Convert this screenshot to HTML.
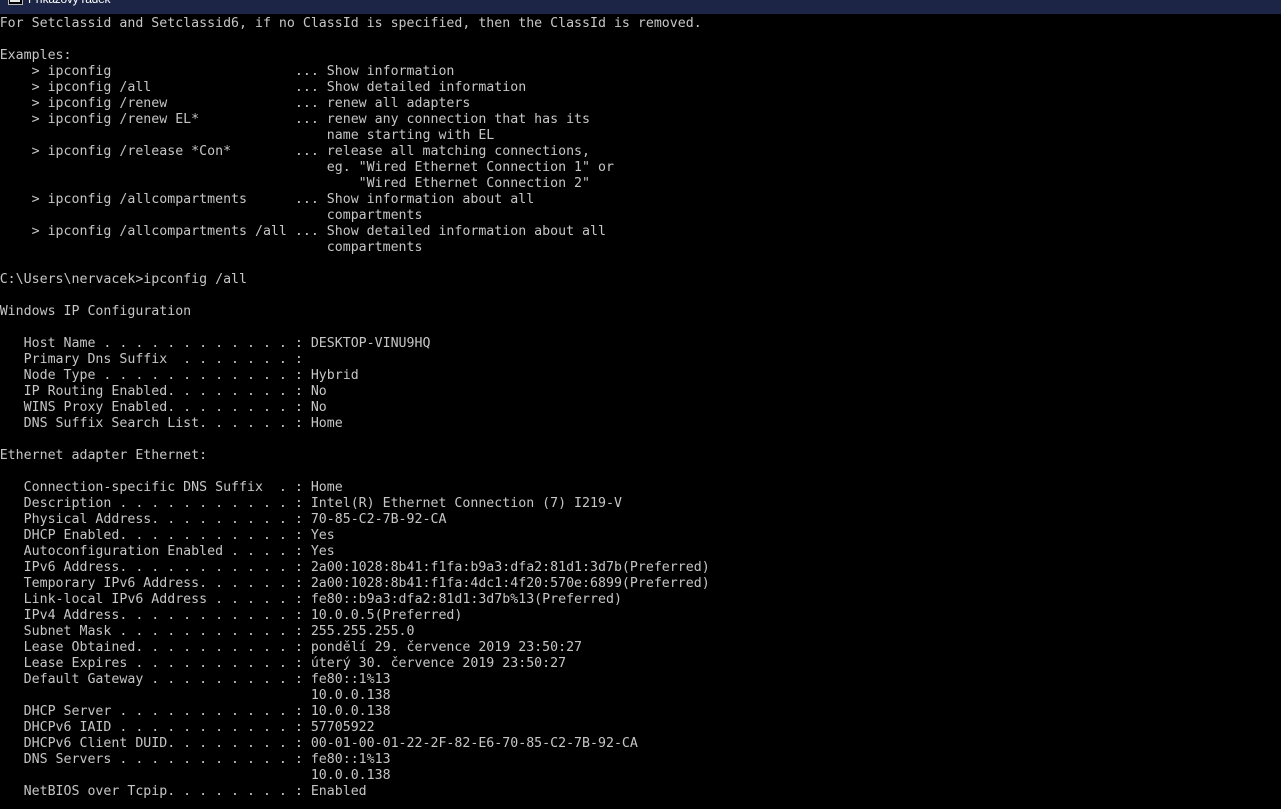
<!DOCTYPE html>
<html><head><meta charset="utf-8">
<style>
html,body{margin:0;padding:0;background:#000;width:1281px;height:809px;overflow:hidden}
#bar{position:absolute;left:0;top:0;width:1281px;height:14px;background:#1c2546;overflow:hidden}
#ic{position:absolute;left:8px;top:-6px;width:15px;height:11px;background:#000;border:1px solid #b8b8b8;box-sizing:border-box}
#ic2{position:absolute;left:10px;top:0;width:10px;height:2px;background:#e8e8e8}
#ttl{position:absolute;left:28px;top:-9px;font:12px/16px "Liberation Sans",sans-serif;letter-spacing:-.25px;color:#fff;white-space:pre}
pre{position:absolute;left:-.3px;top:16px;margin:0;font-family:"DejaVu Sans Mono","Liberation Mono",monospace;font-size:13.26px;line-height:16px;color:#c6c6c6}
</style></head><body>
<div id="bar"><div id="ic"></div><div id="ic2"></div><div id="ttl">Příkazový řádek</div></div>
<pre>For Setclassid and Setclassid6, if no ClassId is specified, then the ClassId is removed.

Examples:
    &gt; ipconfig                       ... Show information
    &gt; ipconfig /all                  ... Show detailed information
    &gt; ipconfig /renew                ... renew all adapters
    &gt; ipconfig /renew EL*            ... renew any connection that has its
                                         name starting with EL
    &gt; ipconfig /release *Con*        ... release all matching connections,
                                         eg. "Wired Ethernet Connection 1" or
                                             "Wired Ethernet Connection 2"
    &gt; ipconfig /allcompartments      ... Show information about all
                                         compartments
    &gt; ipconfig /allcompartments /all ... Show detailed information about all
                                         compartments

C:\Users\nervacek&gt;ipconfig /all

Windows IP Configuration

   Host Name . . . . . . . . . . . . : DESKTOP-VINU9HQ
   Primary Dns Suffix  . . . . . . . :
   Node Type . . . . . . . . . . . . : Hybrid
   IP Routing Enabled. . . . . . . . : No
   WINS Proxy Enabled. . . . . . . . : No
   DNS Suffix Search List. . . . . . : Home

Ethernet adapter Ethernet:

   Connection-specific DNS Suffix  . : Home
   Description . . . . . . . . . . . : Intel(R) Ethernet Connection (7) I219-V
   Physical Address. . . . . . . . . : 70-85-C2-7B-92-CA
   DHCP Enabled. . . . . . . . . . . : Yes
   Autoconfiguration Enabled . . . . : Yes
   IPv6 Address. . . . . . . . . . . : 2a00:1028:8b41:f1fa:b9a3:dfa2:81d1:3d7b(Preferred)
   Temporary IPv6 Address. . . . . . : 2a00:1028:8b41:f1fa:4dc1:4f20:570e:6899(Preferred)
   Link-local IPv6 Address . . . . . : fe80::b9a3:dfa2:81d1:3d7b%13(Preferred)
   IPv4 Address. . . . . . . . . . . : 10.0.0.5(Preferred)
   Subnet Mask . . . . . . . . . . . : 255.255.255.0
   Lease Obtained. . . . . . . . . . : pondělí 29. července 2019 23:50:27
   Lease Expires . . . . . . . . . . : úterý 30. července 2019 23:50:27
   Default Gateway . . . . . . . . . : fe80::1%13
                                       10.0.0.138
   DHCP Server . . . . . . . . . . . : 10.0.0.138
   DHCPv6 IAID . . . . . . . . . . . : 57705922
   DHCPv6 Client DUID. . . . . . . . : 00-01-00-01-22-2F-82-E6-70-85-C2-7B-92-CA
   DNS Servers . . . . . . . . . . . : fe80::1%13
                                       10.0.0.138
   NetBIOS over Tcpip. . . . . . . . : Enabled</pre>
</body></html>
